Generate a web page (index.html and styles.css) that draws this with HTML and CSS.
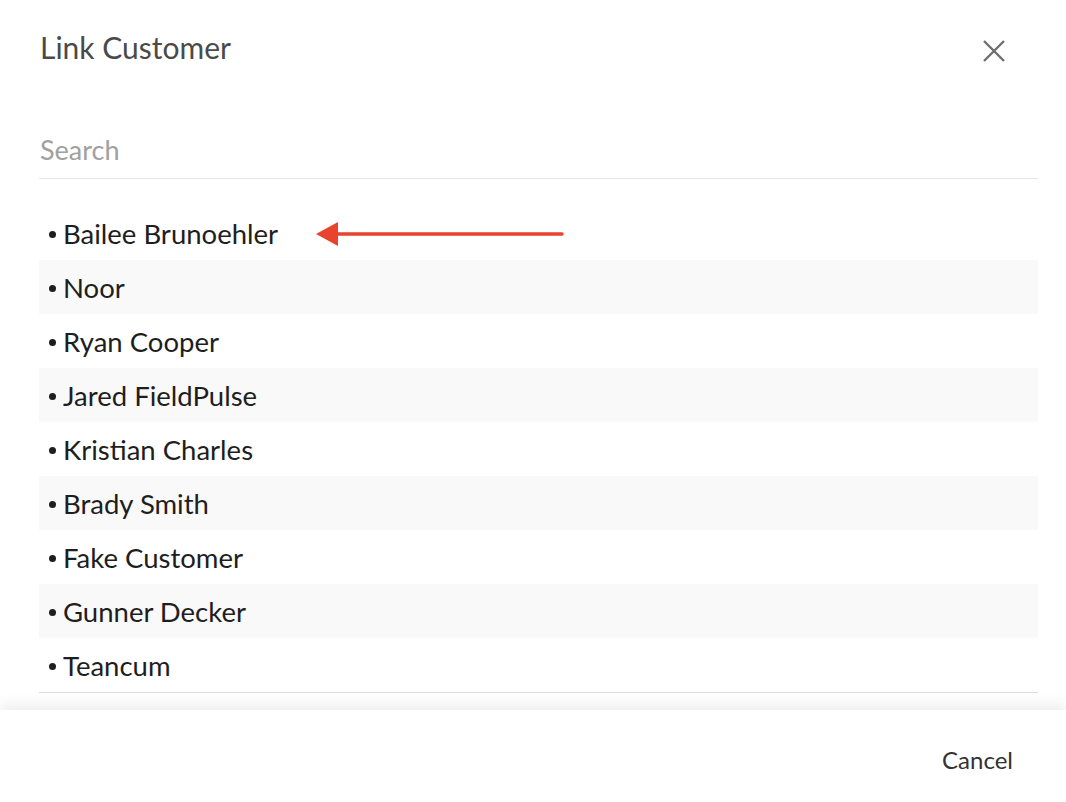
FILE: index.html
```html
<!DOCTYPE html>
<html lang="en">
<head>
    <meta charset="UTF-8">
    <meta name="viewport" content="width=device-width, initial-scale=1.0">
    <title>Link Customer</title>
    <link rel="stylesheet" href="styles.css">
</head>
<body>
    <div class="modal">
        <div class="modal-body">
            <div class="header">
                <h1 class="title">Link Customer</h1>
                <button class="close" aria-label="Close">
                    <svg width="22" height="22" viewBox="0 0 22 22">
                        <path d="M1 1 L21 21 M21 1 L1 21" stroke="#6e6e6e" stroke-width="2.4" fill="none"/>
                    </svg>
                </button>
            </div>

            <input class="search" type="text" placeholder="Search">

            <ul class="customers">
                <li class="customer">
                    <span>Bailee Brunoehler</span>
                    <svg class="pointer" width="250" height="26" viewBox="0 0 250 26">
                        <path d="M20 13 L246 13" stroke="#e8432e" stroke-width="3.5" stroke-linecap="round"/>
                        <path d="M0 13 L22 1 L22 25 Z" fill="#e8432e"/>
                    </svg>
                </li>
                <li class="customer">Noor</li>
                <li class="customer">Ryan Cooper</li>
                <li class="customer">Jared FieldPulse</li>
                <li class="customer">Kristian Charles</li>
                <li class="customer">Brady Smith</li>
                <li class="customer">Fake Customer</li>
                <li class="customer">Gunner Decker</li>
                <li class="customer">Teancum</li>
            </ul>
        </div>

        <div class="footer">
            <button class="cancel">Cancel</button>
        </div>
    </div>
</body>
</html>
```

FILE: styles.css
```css
body {
    margin: 0;
    background-color: #fff;
    font-family: Lato, "Open Sans", sans-serif;
    color: #1e1e1e;
}

.modal {
    width: 1066px;
    height: 802px;
    display: flex;
    flex-direction: column;
    overflow: hidden;
}

.modal-body {
    padding: 0 28px 0 39px;
    height: 710px;
}

.header {
    display: flex;
    justify-content: space-between;
    align-items: center;
    height: 96px;
    padding-right: 33px;
}

.title {
    margin: 0 0 2px 1px;
    font-size: 30px;
    font-weight: 400;
    color: #4a4a4a;
}

.close {
    border: none;
    background: none;
    padding: 0;
    margin-top: 6px;
    cursor: pointer;
    display: flex;
}

.search {
    display: block;
    width: 100%;
    box-sizing: border-box;
    margin-top: 37px;
    padding: 0 0 12px 1px;
    border: none;
    border-bottom: 1px solid #e6e6e6;
    font-family: inherit;
    font-size: 27px;
    color: #333;
    outline: none;
}

.search::placeholder {
    color: #a0a0a0;
}

.customers {
    list-style: none;
    margin: 27px 0 0;
    padding: 0;
    border-bottom: 1px solid #dcdcdc;
}

.customer {
    display: flex;
    align-items: center;
    height: 54px;
    padding-left: 10px;
    font-size: 27.5px;
    color: #1e1e1e;
}

.customer::before {
    content: "";
    width: 7px;
    height: 7px;
    margin: 3px 7px 0 0;
    border-radius: 50%;
    background-color: #1e1e1e;
    flex-shrink: 0;
}

.customer:nth-child(even) {
    background-color: #f9f9f9;
}

.pointer {
    margin-left: 38px;
    margin-top: 2px;
}

.footer {
    flex: 1;
    display: flex;
    justify-content: flex-end;
    align-items: center;
    padding: 6px 53px 0 0;
    background-color: #fff;
    box-shadow: 0 -6px 12px rgba(0, 0, 0, 0.07);
    position: relative;
}

.cancel {
    border: none;
    background: none;
    padding: 0;
    font-family: inherit;
    font-size: 24px;
    color: #333;
    cursor: pointer;
}
```
